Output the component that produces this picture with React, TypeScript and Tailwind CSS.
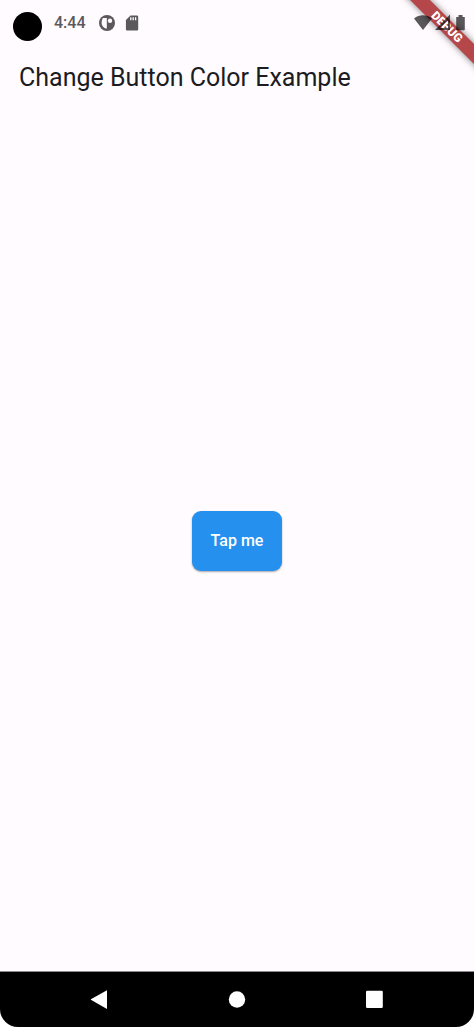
import { useState } from "react";

function StatusBar() {
  return (
    <div className="h-[46px] px-[13px] pt-3">
      <div className="flex items-start gap-3">
        <div className="h-[29px] w-[29px] rounded-full bg-black"></div>
        <div className="flex h-[22px] items-center text-[#5b595c]">
          <span className="text-[16px] leading-[22px] font-medium">4:44</span>
          <svg className="ml-3 h-[18px] w-[18px]" viewBox="0 0 18 18" fill="none">
            <circle cx="9" cy="9" r="8" fill="currentColor" />
            <path d="M5 4h3.800v10.500H7.500C5.200 13.500 3.600 11.500 3.600 9c0-2 .5-3.700 1.400-5z" fill="#fffbff" />
            <circle cx="12" cy="6.800" r="2.200" fill="#fffbff" />
          </svg>
          <svg className="ml-2 h-[18px] w-[18px]" viewBox="0 0 18 18" fill="none">
            <path d="M6.500 1.500h6.300c.8 0 1.400.6 1.400 1.400v12.300c0 .8-.6 1.400-1.400 1.400H3.300c-.8 0-1.400-.6-1.400-1.400V6z" fill="currentColor" />
            <path d="M6.800 3.200v3M9.200 3.200v3M11.600 3.200v3" stroke="#fffbff" strokeWidth="1.300" />
          </svg>
        </div>
      </div>
    </div>
  );
}

function DebugBanner() {
  return (
    <div className="pointer-events-none absolute top-0 right-0 h-20 w-20 overflow-hidden">
      <div className="absolute top-[20px] left-[-7px] flex h-[14px] w-[120px] rotate-45 items-center justify-center bg-[#b5474b] text-[12px] leading-[14px] font-black text-white shadow-[0_0_7px_rgba(0,0,0,0.5)]">
        DEBUG
      </div>
      {/* system icons sit above the banner */}
      <svg className="absolute top-[13px] right-0 h-5 w-[62px]" viewBox="0 0 62 20" fill="#000" fillOpacity="0.65">
        <path d="M2 5.500C7.200 1.300 14.800 1.300 20 5.500L11 17z" />
        <path d="M38 1.500V17H23z M36 7v8h-8z" fillRule="evenodd" />
        <path d="M44.200 4h2.300V2h4v2h2.300v12.300c0 .6-.4 1-1 1h-6.600c-.6 0-1-.4-1-1z" />
      </svg>
    </div>
  );
}

function NavBar() {
  return (
    <nav className="flex h-14 items-center justify-between rounded-b-[18px] border-t border-[#8d8b8d] bg-black px-[90px] text-white">
      <button aria-label="Back">
        <svg className="h-5 w-[18px]" viewBox="0 0 18 20" fill="currentColor">
          <path d="M17 .2v18.800L1.300 10.100c-.6-.4-.6-.8 0-1.200z" />
        </svg>
      </button>
      <button aria-label="Home">
        <svg className="h-5 w-[18px]" viewBox="0 0 18 20" fill="currentColor">
          <circle cx="9" cy="9.500" r="8.200" />
        </svg>
      </button>
      <button aria-label="Overview">
        <svg className="h-5 w-[18px]" viewBox="0 0 18 20" fill="currentColor">
          <rect x="0" y=".7" width="16.800" height="17.300" rx="1.200" />
        </svg>
      </button>
    </nav>
  );
}

export default function App() {
  const [pressed, setPressed] = useState(false);

  return (
    <div className="relative flex min-h-screen flex-col bg-white font-[Roboto,sans-serif]">
      <div className="flex flex-1 flex-col bg-[#fffbff]">
        <StatusBar />
        <header className="flex h-16 items-center px-[19px]">
          <h1 className="text-[25px] leading-8 text-[#1c1b1f]">Change Button Color Example</h1>
        </header>
        <main className="flex flex-1 items-center justify-center">
          <button
            onClick={() => setPressed(!pressed)}
            className={`h-[60px] rounded-[9px] px-[19px] text-[16px] leading-6 font-medium text-white shadow-[0_1px_2px_rgba(0,0,0,0.35)] ${pressed ? "bg-[#4caf50]" : "bg-[#2590ee]"}`}
          >
            Tap me
          </button>
        </main>
      </div>
      <NavBar />
      <DebugBanner />
    </div>
  );
}
